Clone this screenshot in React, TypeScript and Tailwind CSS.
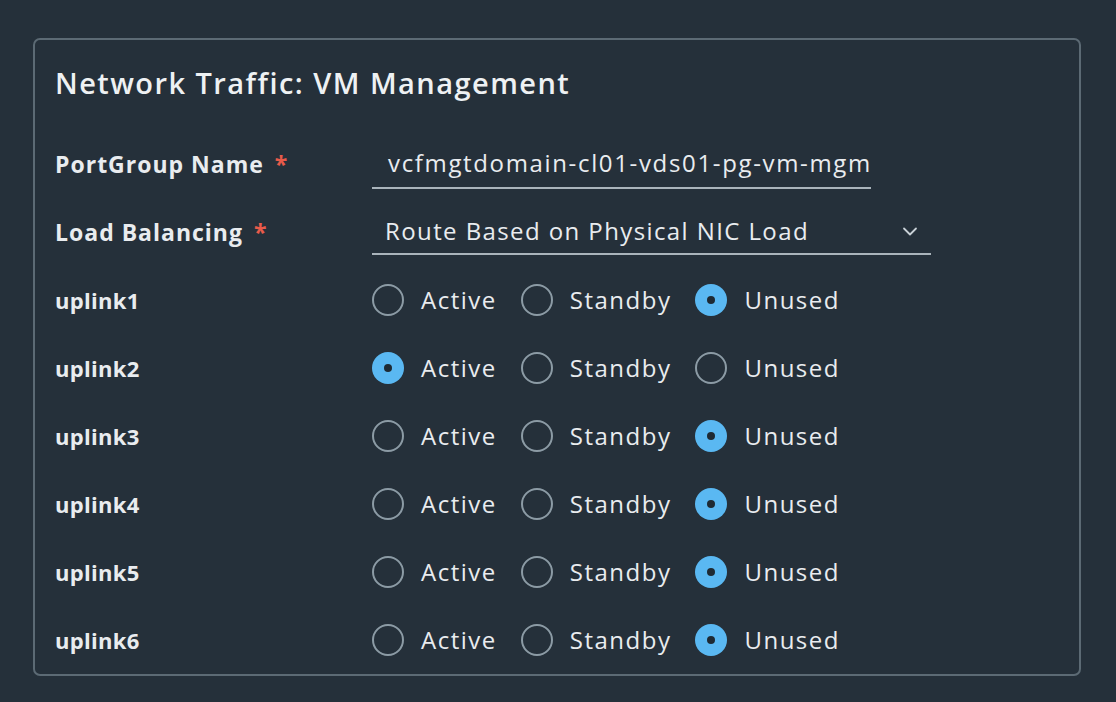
import React from "react";

const rows: { name: string; sel: number }[] = [
  { name: "uplink1", sel: 2 },
  { name: "uplink2", sel: 0 },
  { name: "uplink3", sel: 2 },
  { name: "uplink4", sel: 2 },
  { name: "uplink5", sel: 2 },
  { name: "uplink6", sel: 2 },
];

const opts = ["Active", "Standby", "Unused"];

function Radio({ checked, label }: { checked: boolean; label: string }) {
  return (
    <div className="flex items-center">
      {checked ? (
        <span className="flex h-[32px] w-[32px] items-center justify-center rounded-full bg-[#5ab8f2]">
          <span className="h-[8px] w-[8px] rounded-full bg-[#1e2a33]" />
        </span>
      ) : (
        <span className="h-[32px] w-[32px] rounded-full border-2 border-[#8c9ba5]" />
      )}
      <span className="ml-[17px] text-[24px] tracking-[1.5px] text-[#e9ecef]">{label}</span>
    </div>
  );
}

export default function App() {
  return (
    <div
      className="h-[702px] w-[1116px] bg-[#25303a] pl-[33px] pt-[38px]"
      style={{ fontFamily: "'Open Sans', 'Noto Sans', sans-serif" }}
    >
      <div className="h-[638px] w-[1048px] rounded-[7px] border-2 border-[#5c6a74] pl-[20px] pt-[23px]">
        <h1 className="text-[29px] font-semibold leading-[40px] tracking-[1.45px] text-[#eef1f3]">Network Traffic: VM Management</h1>
        <div className="mt-[27px] flex h-[68px] items-center">
          <div className="w-[317px] text-[23px] font-bold tracking-[1px] text-[#e9ecef]">
            PortGroup Name <span className="ml-[4px] text-[#e85b4a]">*</span>
          </div>
          <div className="flex h-[50px] w-[499px] items-center overflow-hidden border-b-2 border-[#aab4bb] pl-[16px] text-[24px] tracking-[1.65px] text-[#e9ecef]">
            <span className="whitespace-nowrap">vcfmgtdomain-cl01-vds01-pg-vm-mgmt</span>
          </div>
        </div>
        <div className="flex h-[68px] items-center">
          <div className="w-[317px] text-[23px] font-bold tracking-[1px] text-[#e9ecef]">
            Load Balancing <span className="ml-[4px] text-[#e85b4a]">*</span>
          </div>
          <div className="flex h-[46px] w-[559px] items-center justify-between border-b-2 border-[#aab4bb] pl-[13px] pr-[13px] text-[24px] tracking-[1.4px] text-[#e9ecef]">
            <span>Route Based on Physical NIC Load</span>
            <svg width="16" height="16" viewBox="0 0 16 16" fill="none" stroke="#c8d0d6" strokeWidth="1.8" strokeLinecap="round" strokeLinejoin="round">
              <path d="M2 5.5l6 6 6-6" />
            </svg>
          </div>
        </div>
        <div className="flex flex-col">
          {rows.map((r) => (
            <div key={r.name} className="flex h-[68px] items-center">
              <div className="w-[317px] text-[22px] font-bold tracking-[0.3px] text-[#e9ecef]">{r.name}</div>
              <div className="flex items-center gap-[24px]">
                {opts.map((o, i) => (
                  <Radio key={o} checked={r.sel === i} label={o} />
                ))}
              </div>
            </div>
          ))}
        </div>
      </div>
    </div>
  );
}
